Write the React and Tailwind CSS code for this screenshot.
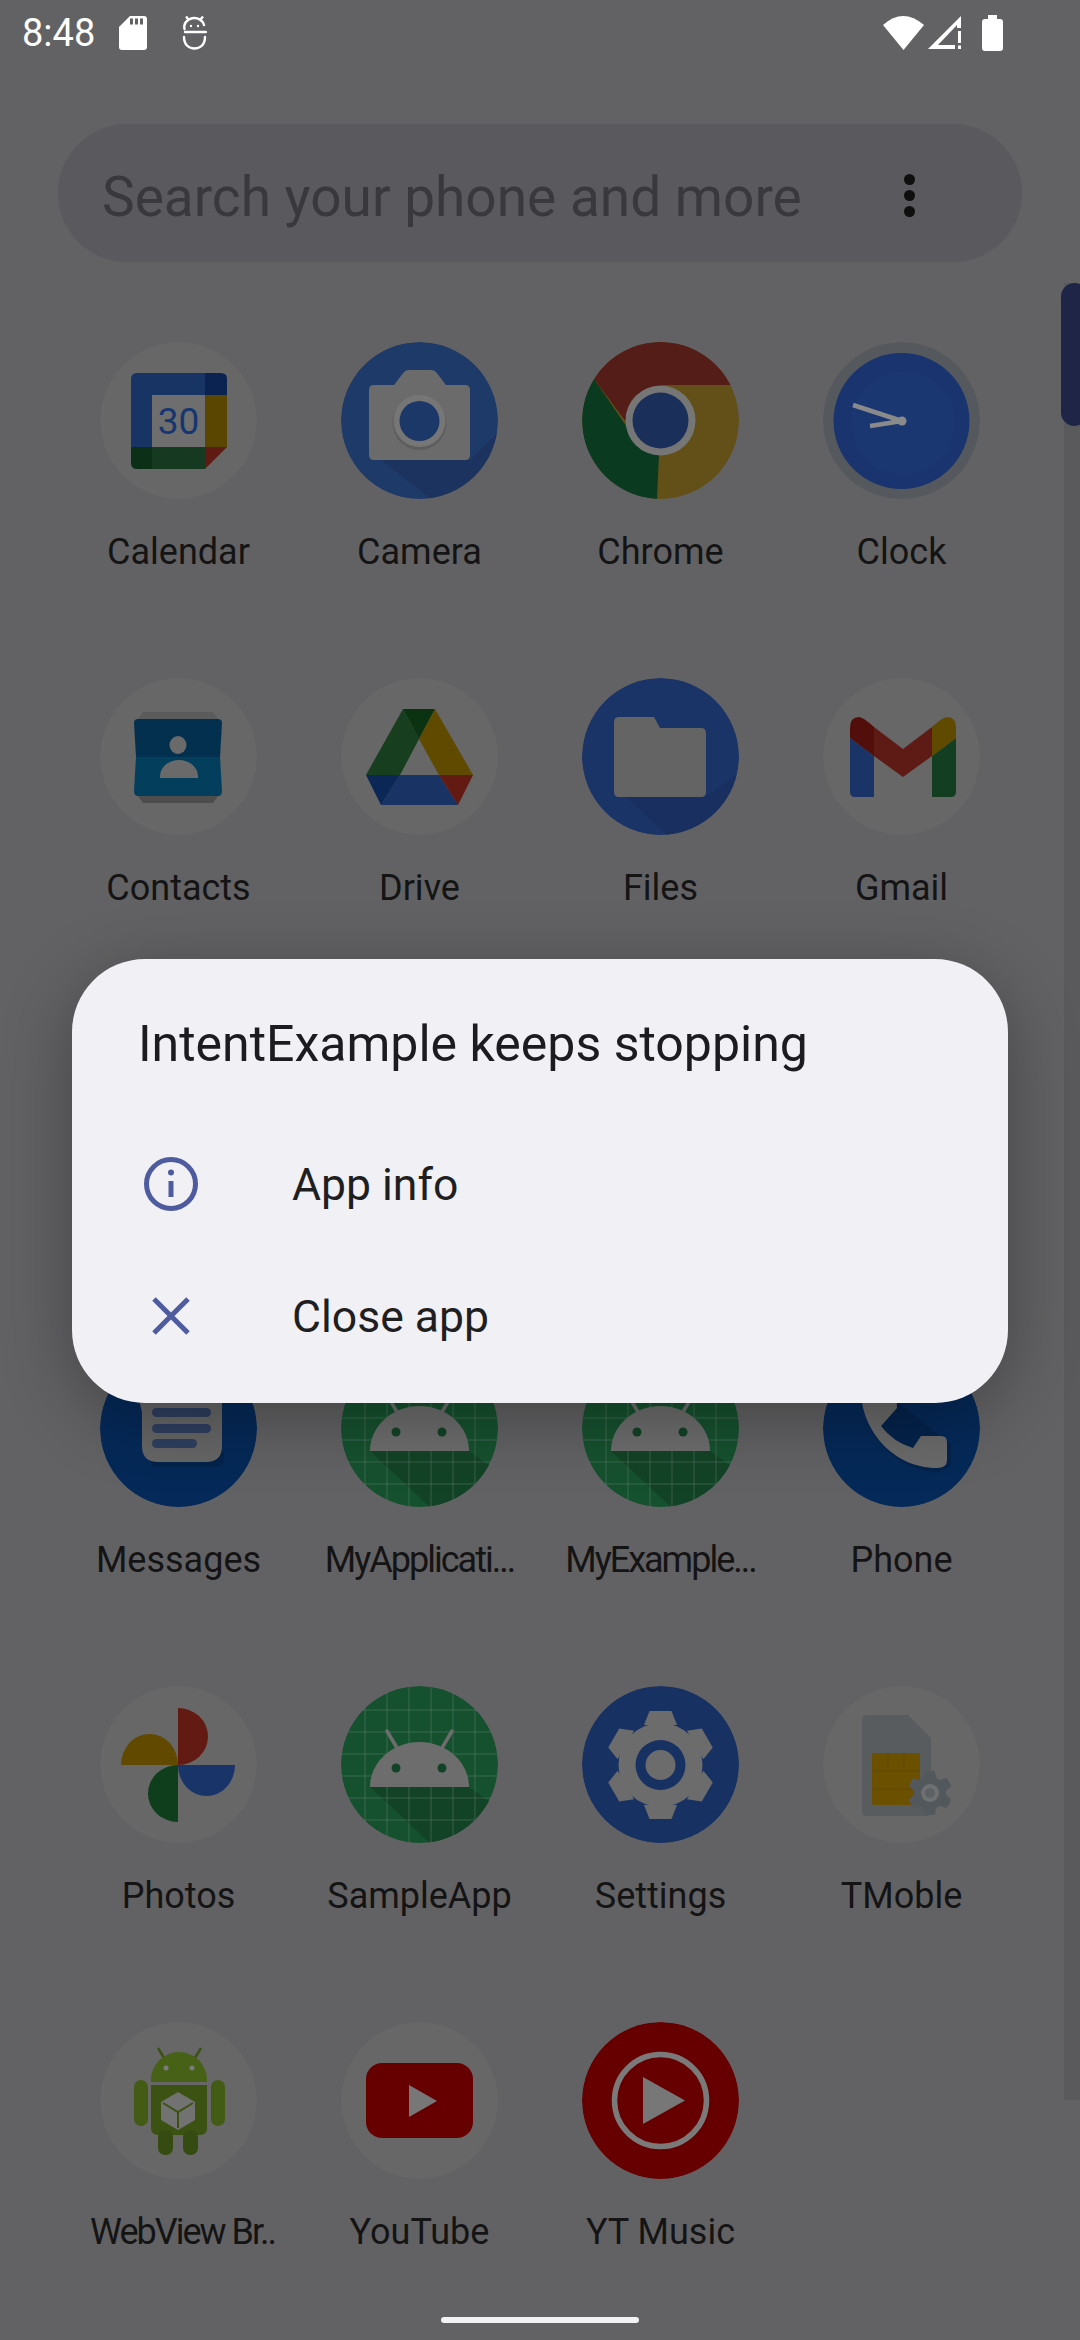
import React from 'react';

const Box = ({ children }) => (
  <svg viewBox="0 0 157 157" className="w-[157px] h-[157px] rounded-full overflow-hidden">
    {children}
  </svg>
);

const Plate = ({ fill = '#676767' }) => <circle cx="78.5" cy="78.5" r="78.5" fill={fill} />;

// Generic gear: six teeth rotated around the centre
const Gear = ({ cx, cy, r, tooth, width, fill }) => (
  <g fill={fill}>
    <circle cx={cx} cy={cy} r={r} />
    {[0, 60, 120, 180, 240, 300].map((a) => (
      <path
        key={a}
        transform={`rotate(${a} ${cx} ${cy})`}
        d={`M${cx - width * 0.75} ${cy - r + 2} L${cx - width / 2} ${cy - tooth} H${cx + width / 2} L${cx + width * 0.75} ${cy - r + 2} Z`}
      />
    ))}
  </g>
);

const CalendarIcon = () => (
  <Box>
    <Plate />
    <path d="M37 31H105V53H52V105H31V37Q31 31 37 31Z" fill="#173464" />
    <path d="M105 31H121Q127 31 127 37V53H105Z" fill="#0b2350" />
    <rect x="105" y="53" width="22" height="52" fill="#5a4600" />
    <path d="M52 105H105V127H52Z" fill="#153a21" />
    <path d="M31 105H52V127H37Q31 127 31 121Z" fill="#0c2f17" />
    <path d="M105 105H127L105 127Z" fill="#5e1a13" />
    <rect x="52" y="53" width="53" height="52" fill="#6e6e6e" />
    <text x="78.5" y="92" textAnchor="middle" fontFamily="Roboto, sans-serif" fontSize="37" fill="#153670">30</text>
  </Box>
);

const CameraIcon = () => (
  <Box>
    <Plate fill="#1e3a69" />
    <path d="M40 118H129L157 90V157H90Z" fill="#192c52" opacity="0.45" />
    <path d="M33 43H53L63 30Q65 28 68 28H90Q93 28 95 30L105 43H124Q129 43 129 48V113Q129 118 124 118H33Q28 118 28 113V48Q28 43 33 43Z" fill="#6b6b6b" />
    <circle cx="78.5" cy="81" r="27" fill="#5d5d5d" />
    <circle cx="78.5" cy="79" r="26" fill="#767676" />
    <circle cx="78.5" cy="79" r="20" fill="#1c3868" />
  </Box>
);

const ChromeIcon = () => (
  <Box>
    <Plate fill="#635018" />
    <path d="M78.5 78.5L75 157A78.5 78.5 0 0 1 12 37L45 85Z" fill="#0a3a20" />
    <path d="M12 37A78.5 78.5 0 0 1 149 43H81L50 88Z" fill="#541d17" />
    <circle cx="78.5" cy="78.5" r="35" fill="#767676" />
    <circle cx="78.5" cy="78.5" r="28" fill="#1a305b" />
  </Box>
);

const ClockIcon = () => (
  <Box>
    <Plate fill="#55595e" />
    <circle cx="78.5" cy="79" r="68" fill="#19346e" />
    <circle cx="80" cy="81" r="52" fill="#1b3772" />
    <path d="M30 63L79 79L47 84" fill="none" stroke="#8a8a8a" strokeWidth="4.5" />
    <circle cx="79" cy="79" r="4.5" fill="#8a8a8a" />
  </Box>
);

const ContactsIcon = () => (
  <Box>
    <Plate />
    <path d="M43 34H113L118 41H38Z" fill="#5b5b5b" />
    <path d="M38 118H118L113 125H43Z" fill="#4d4d4d" />
    <path d="M38 41H118Q122 41 122 45L120 79H36L34 45Q34 41 38 41Z" fill="#03304e" />
    <path d="M36 79H120L122 113Q122 118 118 118H38Q34 118 34 113Z" fill="#033e5d" />
    <ellipse cx="78" cy="67" rx="8.5" ry="9" fill="#6a6a6a" />
    <path d="M60 100V98A19 16 0 0 1 98 98V100Z" fill="#6a6a6a" />
  </Box>
);

const DriveIcon = () => (
  <Box>
    <Plate />
    <path d="M62 31L25 97H59L78 61Z" fill="#163e1f" />
    <path d="M62 31H94L78 61Z" fill="#0b3312" />
    <path d="M94 31L132 97H98L78 61Z" fill="#5f4a00" />
    <path d="M59 97H98L117 127H40Z" fill="#193365" />
    <path d="M25 97H59L40 127Z" fill="#0a2755" />
    <path d="M98 97H132L117 127Z" fill="#621a13" />
  </Box>
);

const FilesIcon = () => (
  <Box>
    <Plate fill="#1a3468" />
    <path d="M45 119H124L157 95V157H85Z" fill="#172b54" opacity="0.45" />
    <path d="M37 39H72L78 50H119Q124 50 124 55V114Q124 119 119 119H37Q32 119 32 114V44Q32 39 37 39Z" fill="#646464" />
  </Box>
);

const GmailIcon = () => (
  <Box>
    <Plate />
    <path d="M27 60L51 78V119H32Q27 119 27 114Z" fill="#1a3468" />
    <path d="M133 60L109 78V119H128Q133 119 133 114Z" fill="#143e21" />
    <path d="M51 49L80 71L109 49V78L80 99L51 78Z" fill="#5e1a15" />
    <path d="M27 50Q27 39 36 39Q40 39 51 49V78L27 60Z" fill="#520e0a" />
    <path d="M133 50Q133 39 124 39Q120 39 109 49V78L133 60Z" fill="#5f4a00" />
  </Box>
);

const MessagesIcon = () => (
  <Box>
    <Plate fill="#052958" />
    <path d="M44 60L52 117H118Q128 112 122 100Z" fill="#04234c" />
    <path d="M34 30H110Q122 30 122 42V96Q122 112 106 112H58Q42 112 42 96V62Z" fill="#666666" />
    <rect x="52" y="58" width="59" height="9" rx="4.5" fill="#2f3f60" />
    <rect x="52" y="74" width="59" height="9" rx="4.5" fill="#2f3f60" />
    <rect x="52" y="89" width="45" height="9" rx="4.5" fill="#2f3f60" />
  </Box>
);

const AndroidAppIcon = () => (
  <Box>
    <Plate fill="#16512f" />
    <path d="M29 101H128L157 122V157H89Z" fill="#134327" />
    {[24, 46, 68, 90, 112, 134].map((p) => (
      <g key={p} stroke="#8a9a8f" strokeOpacity="0.22" strokeWidth="1.5">
        <line x1={p} y1="0" x2={p} y2="157" />
        <line x1="0" y1={p} x2="157" y2={p} />
      </g>
    ))}
    <path d="M46 45L56 62M111 45L101 62" stroke="#6d6d6d" strokeWidth="3.5" strokeLinecap="round" />
    <path d="M29 101A49.5 45 0 0 1 128 101Z" fill="#6d6d6d" />
    <circle cx="55" cy="82" r="4.5" fill="#134327" />
    <circle cx="101" cy="82" r="4.5" fill="#134327" />
  </Box>
);

const PhoneIcon = () => (
  <Box>
    <Plate fill="#052958" />
    <path d="M38 40C38 82 72 122 116 122L128 116V95L60 40Z" fill="#04234c" />
    <path d="M38 20H72L74 58L58 76Q70 92 90 98L98 86H118Q124 86 124 92V110Q124 118 114 118C70 118 38 80 38 40Z" fill="#6a6a6a" />
  </Box>
);

const PhotosIcon = () => (
  <Box>
    <Plate />
    <path d="M78 22A30 28.5 0 0 1 78 79Z" fill="#621a13" />
    <path d="M21 79A28.5 31 0 0 1 78 79Z" fill="#624900" />
    <path d="M78 79H135A28.5 31 0 0 1 78 79Z" fill="#193469" />
    <path d="M78 79V136A30 28.5 0 0 1 78 79Z" fill="#0f3e1c" />
  </Box>
);

const SettingsIcon = () => (
  <Box>
    <Plate fill="#173162" />
    <Gear cx={78.5} cy={79} r={42} tooth={54} width={22} fill="#6c6c6c" />
    <circle cx="78.5" cy="79" r="25" fill="#173162" />
    <circle cx="78.5" cy="79" r="15" fill="#6c6c6c" />
  </Box>
);

const TMobileIcon = () => (
  <Box>
    <Plate />
    <path d="M44 29H85L108 52V125Q108 130 103 130H44Q39 130 39 125V34Q39 29 44 29Z" fill="#585c5f" />
    <rect x="49" y="67" width="48" height="52" rx="2" fill="#6b5000" />
    <path d="M49 85H97M65 67V85M81 67V85M49 103H97" stroke="#5e4600" strokeWidth="1" />
    <Gear cx={107} cy={107} r={16} tooth={22} width={9} fill="#53585c" />
    <circle cx="107" cy="107" r="9" fill="#6e7072" />
    <circle cx="107" cy="107" r="5" fill="#5d6163" />
  </Box>
);

const WebViewIcon = () => (
  <Box>
    <Plate />
    <path d="M58 26L64 36M101 26L95 36" stroke="#3c5213" strokeWidth="2.5" />
    <path d="M51 58A28 28 0 0 1 107 58V60H51Z" fill="#476117" />
    <circle cx="66" cy="46" r="2.5" fill="#7b7b7b" />
    <circle cx="92" cy="46" r="2.5" fill="#7b7b7b" />
    <path d="M51 63H107V106Q107 113 100 113H58Q51 113 51 106Z" fill="#3c5213" />
    <rect x="34" y="58" width="14" height="46" rx="7" fill="#435b14" />
    <rect x="111" y="58" width="14" height="46" rx="7" fill="#435b14" />
    <rect x="58" y="108" width="15" height="25" rx="7" fill="#364b11" />
    <rect x="83" y="108" width="15" height="25" rx="7" fill="#364b11" />
    <path d="M78 70L95 80V98L78 108L61 98V80Z" fill="#727272" />
    <path d="M63 81L78 90L93 81M78 90V106" stroke="#3c5213" strokeWidth="2" fill="none" />
  </Box>
);

const YouTubeIcon = () => (
  <Box>
    <Plate />
    <rect x="25" y="41" width="107" height="75" rx="16" fill="#660000" />
    <path d="M68 63V95L96 79Z" fill="#777777" />
  </Box>
);

const YTMusicIcon = () => (
  <Box>
    <Plate fill="#660000" />
    <circle cx="78.5" cy="78.5" r="46" fill="none" stroke="#7a7a7a" strokeWidth="5.5" />
    <path d="M61 55V102L103 78.5Z" fill="#777777" />
  </Box>
);

const rows = [
  [
    { name: 'Calendar', Icon: CalendarIcon },
    { name: 'Camera', Icon: CameraIcon },
    { name: 'Chrome', Icon: ChromeIcon },
    { name: 'Clock', Icon: ClockIcon },
  ],
  [
    { name: 'Contacts', Icon: ContactsIcon },
    { name: 'Drive', Icon: DriveIcon },
    { name: 'Files', Icon: FilesIcon },
    { name: 'Gmail', Icon: GmailIcon },
  ],
  [],
  [
    { name: 'Messages', Icon: MessagesIcon },
    { name: 'MyApplicati...', Icon: AndroidAppIcon, squeezed: true },
    { name: 'MyExample...', Icon: AndroidAppIcon, squeezed: true },
    { name: 'Phone', Icon: PhoneIcon },
  ],
  [
    { name: 'Photos', Icon: PhotosIcon },
    { name: 'SampleApp', Icon: AndroidAppIcon },
    { name: 'Settings', Icon: SettingsIcon },
    { name: 'TMoble', Icon: TMobileIcon },
  ],
  [
    { name: 'WebView Br..', Icon: WebViewIcon, squeezed: true, nudge: true },
    { name: 'YouTube', Icon: YouTubeIcon },
    { name: 'YT Music', Icon: YTMusicIcon },
  ],
];

const StatusBar = () => (
  <div className="h-[70px] flex items-center pl-[22px] pr-[77px] pb-[4px] text-white">
    <span className="text-[38px] leading-[44px] w-[97px]">8:48</span>
    <svg viewBox="0 0 28 34" className="w-[28px] h-[34px]">
      <path d="M11 0H25Q28 0 28 3V31Q28 34 25 34H3Q0 34 0 31V11Z" fill="#fff" />
      <path d="M11 2.5H14V8.5H11ZM16 2.5H19V8.5H16ZM21 2.5H24V8.5H21Z" fill="#626264" />
    </svg>
    <svg viewBox="0 0 25 34" className="w-[25px] h-[34px] ml-[35px]" fill="none" stroke="#fff" strokeWidth="2.4">
      <path d="M2.5 13A10 9 0 0 1 22 9" strokeLinecap="round" />
      <path d="M3 16H24" strokeLinecap="round" />
      <path d="M2 21C2 29 7 32.5 12.5 32.5S23 29 23 21" strokeLinecap="round" />
      <path d="M4 0.5L6.5 3.5M21 0.5L18.5 3.5" />
      <circle cx="9" cy="10" r="1.2" fill="#fff" stroke="none" />
      <circle cx="16" cy="10" r="1.2" fill="#fff" stroke="none" />
    </svg>
    <div className="flex-1" />
    <svg viewBox="0 0 41 34" className="w-[41px] h-[34px]">
      <path d="M0 9Q20 -9 41 9L20.5 34Z" fill="#fff" />
    </svg>
    <svg viewBox="0 0 34 34" className="w-[34px] h-[34px] ml-[4px]">
      <path d="M33 0V12H29V9L10 29H27V33H0Z" fill="#fff" />
      <path d="M30 15H33V27H30ZM30 29.5H33V33H30Z" fill="#fff" />
    </svg>
    <svg viewBox="0 0 21 36" className="w-[21px] h-[36px] ml-[20px]">
      <path d="M6 0H15V4H18Q21 4 21 7V33Q21 36 18 36H3Q0 36 0 33V7Q0 4 3 4H6Z" fill="#fff" />
    </svg>
  </div>
);

const CrashDialog = () => (
  <div className="absolute top-[959px] left-[72px] w-[936px] h-[444px] rounded-[73px] bg-[#f1f0f5] shadow-[0_16px_70px_rgba(0,0,0,0.3)] pt-[55px]">
    <h2 className="pl-[66px] text-[50px] leading-[60px] text-[#1c1b20]">IntentExample keeps stopping</h2>
    <div className="mt-[43px]">
      <div className="h-[133px] flex items-center text-[44.5px] text-[#1f1f22]">
        <div className="w-[220px] pl-[72px]">
          <svg viewBox="0 0 54 54" className="w-[54px] h-[54px]" fill="none" stroke="#4e5c9f" strokeWidth="5">
            <circle cx="27" cy="27" r="24.5" />
            <path d="M27 24V40" />
            <circle cx="27" cy="15.5" r="3" fill="#4e5c9f" stroke="none" />
          </svg>
        </div>
        <span className="mt-[3px]">App info</span>
      </div>
      <div className="h-[133px] flex items-center text-[44.5px] text-[#1f1f22]">
        <div className="w-[220px] pl-[80px]">
          <svg viewBox="0 0 38 38" className="w-[38px] h-[38px] -mt-[2px]" fill="none" stroke="#4e5c9f" strokeWidth="5">
            <path d="M2 2L36 36M36 2L2 36" />
          </svg>
        </div>
        <span className="mt-[2px]">Close app</span>
      </div>
    </div>
  </div>
);

export default function App() {
  return (
    <div className="relative w-[1080px] h-[2340px] overflow-hidden bg-[#626264] font-[Roboto,sans-serif]">
      <StatusBar />

      {/* Search bar */}
      <div className="mt-[54px] mx-[58px] h-[138px] rounded-full bg-[#59595e] flex items-center pl-[44px] pr-[107px] justify-between">
        <span className="mt-[8px] text-[55px] leading-[60px] text-[#39393d]">Search your phone and more</span>
        <div className="mt-[5px] flex flex-col gap-[5px]">
          <span className="block w-[11px] h-[11px] rounded-full bg-[#0f0f10]" />
          <span className="block w-[11px] h-[11px] rounded-full bg-[#0f0f10]" />
          <span className="block w-[11px] h-[11px] rounded-full bg-[#0f0f10]" />
        </div>
      </div>

      {/* App grid */}
      <div className="mt-[80px] mx-[58px]">
        {rows.map((row, i) => (
          <div key={i} className="h-[336px] grid grid-cols-4">
            {row.map(({ name, Icon, squeezed, nudge }) => (
              <div key={name} className="flex flex-col items-center">
                <Icon />
                <span
                  className={
                    squeezed
                      ? `mt-[31px] text-[36px] leading-[44px] tracking-[-2px] text-[#141415] whitespace-nowrap ${nudge ? 'ml-[8px]' : ''}`
                      : 'mt-[31px] text-[36px] leading-[44px] text-[#141415] whitespace-nowrap'
                  }
                >
                  {name}
                </span>
              </div>
            ))}
          </div>
        ))}
      </div>

      {/* Scrollbar */}
      <div className="absolute top-[283px] right-0 bottom-[240px] w-[16px] bg-[#5a5a5c]" />
      <div className="absolute top-[283px] right-[-8px] w-[27px] h-[143px] rounded-[14px] bg-[#1e2547]" />

      <CrashDialog />

      {/* Home indicator */}
      <div className="absolute top-[2317px] left-[441px] w-[198px] h-[6px] rounded-full bg-[#f2f2f2]" />
    </div>
  );
}
